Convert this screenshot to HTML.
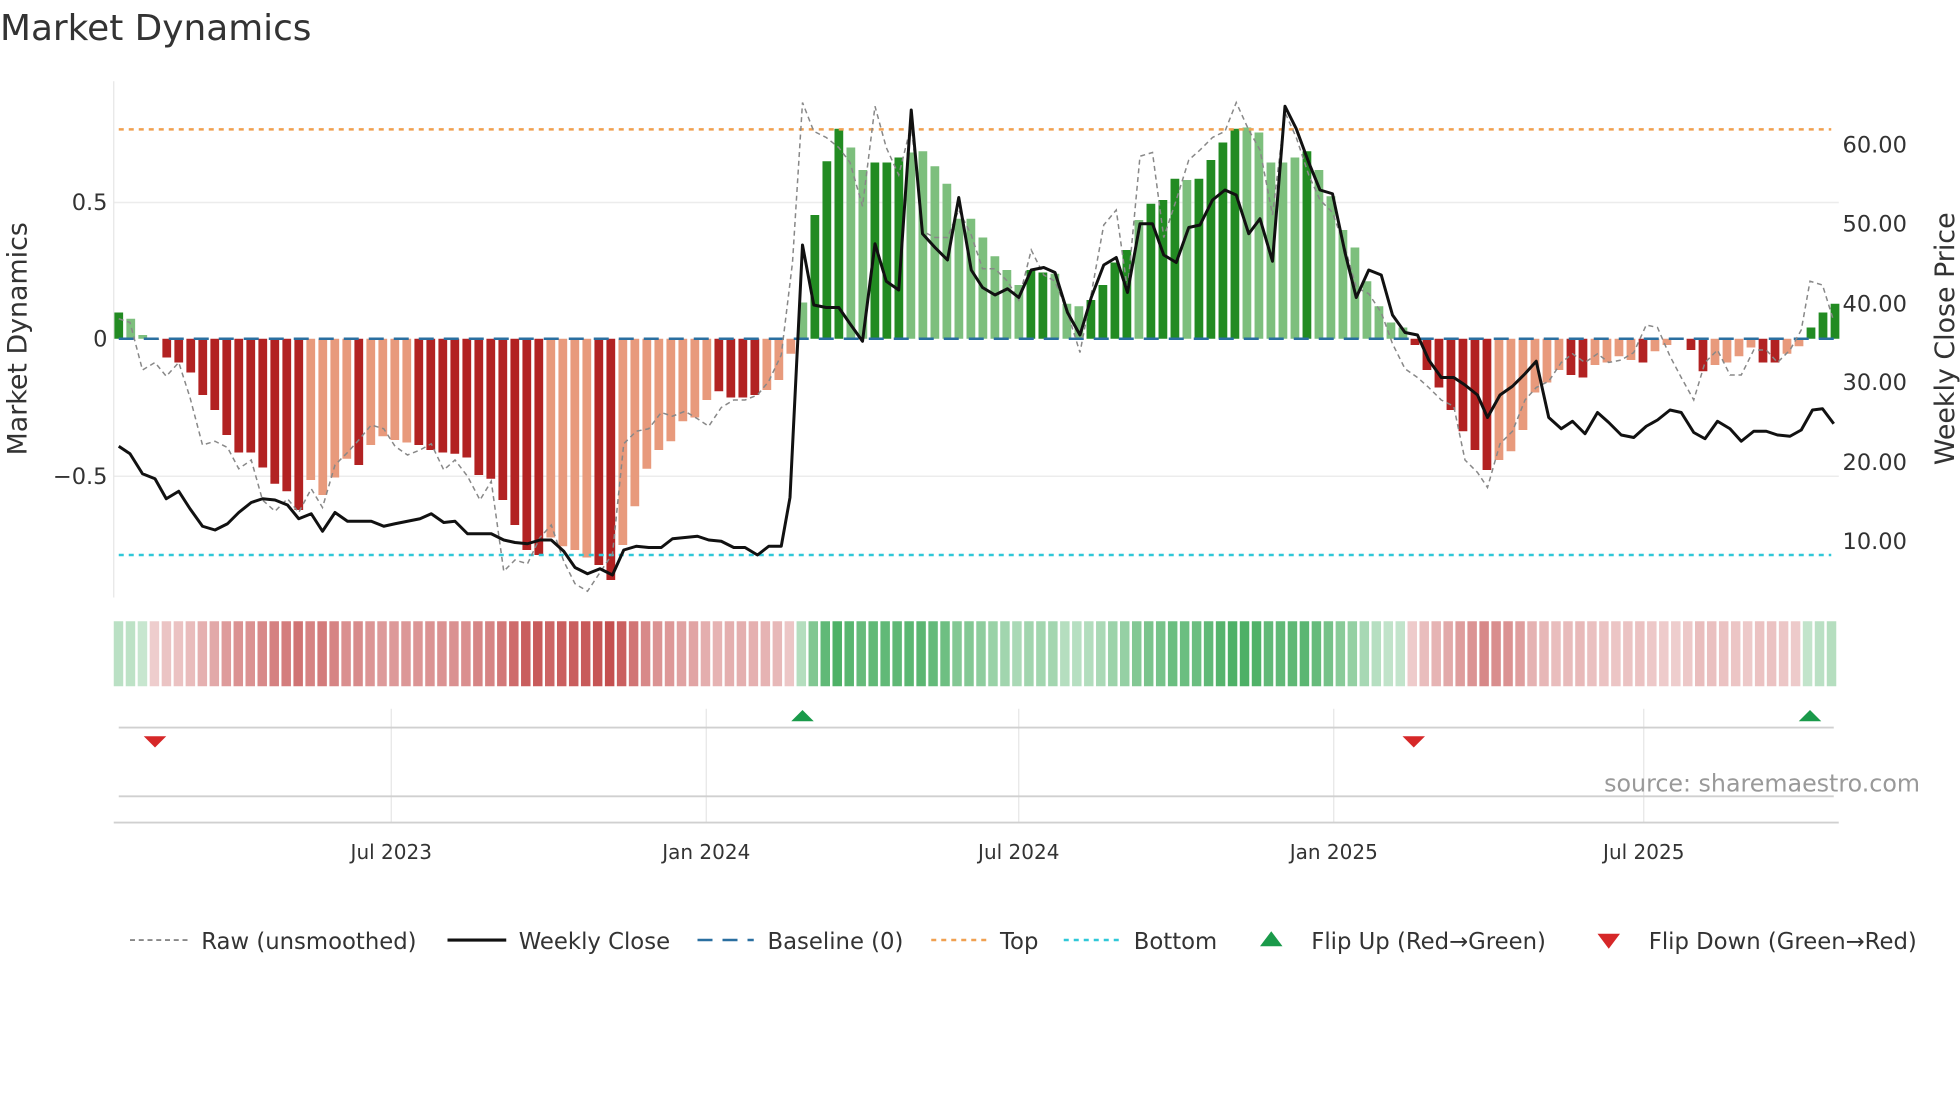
<!DOCTYPE html>
<html><head><meta charset="utf-8"><style>
html,body{margin:0;padding:0;background:#fff;width:1960px;height:1102px;overflow:hidden}
svg{display:block;font-family:"DejaVu Sans","Liberation Sans",sans-serif}
</style></head><body>
<svg id="s" width="1960" height="1102" viewBox="0 0 1568 881.6" xmlns="http://www.w3.org/2000/svg">
<rect width="1568" height="881.6" fill="#fff"/>
<text x="0" y="32" font-size="28.7" fill="#333">Market Dynamics</text>
<g stroke="#ececec" stroke-width="1.2">
<line x1="91" y1="162" x2="1471" y2="162"/>
<line x1="91" y1="381" x2="1471" y2="381"/>
</g>
<line x1="91" y1="65" x2="91" y2="478" stroke="#e6e6e6" stroke-width="1"/>
<g id="bars"></g>
<line x1="95" y1="271" x2="1468" y2="271" stroke="#2a6fa0" stroke-width="2" stroke-dasharray="12,8"/>
<line x1="95" y1="103.5" x2="1465" y2="103.5" stroke="#f0a050" stroke-width="2" stroke-dasharray="4,4"/>
<line x1="95" y1="444" x2="1465" y2="444" stroke="#30c8d8" stroke-width="2" stroke-dasharray="4,4"/>
<polyline id="raw" fill="none" stroke="#888" stroke-width="1.2" stroke-dasharray="4,3"/>
<polyline id="close" fill="none" stroke="#111" stroke-width="2.4" stroke-linejoin="round"/>
<g font-size="18" fill="#333" text-anchor="end">
<text x="86" y="168">0.5</text><text x="86" y="277">0</text><text x="86" y="387">−0.5</text>
</g>
<g font-size="18" fill="#333">
<text x="1474" y="122">60.00</text><text x="1474" y="185">50.00</text><text x="1474" y="249">40.00</text>
<text x="1474" y="312">30.00</text><text x="1474" y="376">20.00</text><text x="1474" y="439">10.00</text>
</g>
<text transform="translate(21,271) rotate(-90)" font-size="21.5" fill="#333" text-anchor="middle">Market Dynamics</text>
<text transform="translate(1563,271) rotate(-90)" font-size="21.5" fill="#333" text-anchor="middle">Weekly Close Price</text>
<g id="heat"></g>
<g stroke="#e6e6e6" stroke-width="1">
<line x1="313" y1="567" x2="313" y2="658"/><line x1="565" y1="567" x2="565" y2="658"/>
<line x1="815" y1="567" x2="815" y2="658"/><line x1="1067" y1="567" x2="1067" y2="658"/>
<line x1="1315" y1="567" x2="1315" y2="658"/>
</g>
<line x1="95" y1="582" x2="1467" y2="582" stroke="#d0d0d0" stroke-width="1.5"/>
<line x1="95" y1="637" x2="1467" y2="637" stroke="#d0d0d0" stroke-width="1.5"/>
<line x1="91" y1="658" x2="1471" y2="658" stroke="#d0d0d0" stroke-width="1.5"/>
<polygon points="115,589 133,589 124,598" fill="#d62728"/>
<polygon points="1122,589 1140,589 1131,598" fill="#d62728"/>
<polygon points="633,577 651,577 642,568" fill="#1a9a4a"/>
<polygon points="1439,577 1457,577 1448,568" fill="#1a9a4a"/>
<text x="1536" y="633" font-size="19" fill="#999" text-anchor="end">source: sharemaestro.com</text>
<g font-size="16" fill="#333" text-anchor="middle">
<text x="313" y="687">Jul 2023</text><text x="565" y="687">Jan 2024</text><text x="815" y="687">Jul 2024</text>
<text x="1067" y="687">Jan 2025</text><text x="1315" y="687">Jul 2025</text>
</g>
<g font-size="18.2" fill="#333">
<line x1="104" y1="752" x2="150" y2="752" stroke="#888" stroke-width="1.5" stroke-dasharray="4,3"/>
<text x="161" y="759">Raw (unsmoothed)</text>
<line x1="358" y1="752" x2="405" y2="752" stroke="#111" stroke-width="2.5"/>
<text x="415" y="759">Weekly Close</text>
<line x1="558" y1="752" x2="603" y2="752" stroke="#2a6fa0" stroke-width="2" stroke-dasharray="12,8"/>
<text x="614" y="759">Baseline (0)</text>
<line x1="745" y1="752" x2="790" y2="752" stroke="#f0a050" stroke-width="2" stroke-dasharray="4,4"/>
<text x="800" y="759">Top</text>
<line x1="851" y1="752" x2="897" y2="752" stroke="#30c8d8" stroke-width="2" stroke-dasharray="4,4"/>
<text x="907" y="759">Bottom</text>
<polygon points="1008,757 1026,757 1017,745" fill="#1a9a4a"/>
<text x="1049" y="759">Flip Up (Red→Green)</text>
<polygon points="1278,747 1296,747 1287,759" fill="#d62728"/>
<text x="1319" y="759">Flip Down (Green→Red)</text>
</g>
</svg>
<script>
var B="250d 255l 268l 272l 286d 290d 298d 316d 328d 348d 362d 362d 374d 387d 393d 408d 384l 396l 382l 367l 372d 356l 349l 352l 354l 356d 360d 362d 363d 366d 380d 383d 400d 420d 440d 444d 430l 437l 440l 446l 452d 464d 436l 405l 375l 360l 353l 337l 334l 320l 313d 318d 318d 316d 312l 304l 283l 242l 172d 129d 103d 118l 136l 130d 130d 126d 122l 121l 133l 147l 175l 175l 190l 205l 216l 228l 216d 218d 219l 243l 245l 240d 228d 210d 200d 176l 163d 160d 143d 144l 143d 128d 114d 103d 102l 106l 130l 130l 126l 121d 136l 157l 184l 198l 225l 245l 258l 262l 276d 296d 310d 328d 345d 360d 376d 368l 361l 344l 314l 306l 296l 300d 302d 292l 290l 285l 288l 290d 281l 276l 272l 280d 297d 292l 290l 285l 278l 290d 290d 283l 277l 262d 250d 243d".split(" ");
var ns="http://www.w3.org/2000/svg",g=document.getElementById("bars"),h=document.getElementById("heat");
function el(p,t,a){var e=document.createElementNS(ns,t);for(var k in a)e.setAttribute(k,a[k]);p.appendChild(e);}
var n=B.length,st=(1468-95)/(n-1);
B.forEach(function(s,i){var y=parseFloat(s),d=s.slice(-1)=="d",x=95+i*st;
 var pos=y<271||(i>=58&&i<=120&&y<=272);var c;
 if(pos)c=d?"#228b22":"#7dbf7d";else c=d?"#b22222":"#e89a7c";
 var top=Math.min(y,271),hh=Math.abs(y-271);
 if(hh>0.5)el(g,"rect",{x:x-3.5,y:top,width:7,height:hh,fill:c});
 var m=Math.min(1,hh/190);var a=0.25+0.65*m;
 var hc=pos?"rgba(40,160,70,"+a+")":"rgba(190,60,60,"+a+")";
 el(h,"rect",{x:91+i*(1380/n),y:497,width:1380/n-2,height:52,fill:hc});
});
var C=[95,357,104,363,114,379,124,383,133,399,143,393,152,407,162,421,172,424,182,419,191,410,201,402,210,399,220,400,230,404,239,415,249,411,258,425,268,410,278,417,287,417,297,417,307,421,316,419,326,417,336,415,345,411,355,418,364,417,374,427,384,427,393,427,403,432,412,434,422,435,432,432,441,432,451,441,460,454,470,459,480,455,490,460,499,440,509,437,519,438,529,438,538,431,548,430,558,429,567,432,577,433,587,438,596,438,606,444,615,437,625,437,632,398,642,196,651,244,661,246,671,246,680,259,690,273,700,195,709,225,719,232,729,88,738,187,748,198,758,208,767,158,777,216,786,230,796,236,806,231,815,238,825,216,835,214,844,218,854,250,864,268,873,238,883,212,893,206,902,234,912,179,922,179,931,204,941,210,951,182,960,180,970,160,980,152,989,156,999,187,1008,175,1018,209,1028,85,1037,103,1047,130,1056,152,1066,155,1076,202,1085,238,1095,216,1105,220,1114,252,1124,266,1134,268,1143,288,1153,302,1163,302,1172,308,1182,316,1190,334,1200,316,1210,309,1220,299,1229,289,1239,334,1249,343,1258,337,1268,347,1278,330,1287,338,1297,348,1307,350,1317,341,1326,336,1336,328,1345,330,1355,346,1364,351,1374,337,1384,343,1393,353,1403,345,1413,345,1422,348,1432,349,1441,344,1450,328,1458,327,1467,339];
var R=[95,255,104,258,114,296,124,290,133,301,143,290,152,318,162,356,172,353,182,358,191,375,201,368,210,400,220,409,230,399,239,410,249,391,258,406,268,372,278,362,287,352,297,340,307,343,316,357,326,364,336,360,345,355,355,376,364,368,374,381,384,400,393,385,403,457,412,448,422,451,432,430,441,420,451,449,460,467,470,473,480,458,490,443,499,355,509,345,519,343,529,330,538,333,548,329,558,335,567,341,577,326,587,320,596,320,606,316,615,305,625,284,634,210,642,82,651,105,661,110,671,118,680,130,690,165,700,85,709,118,719,140,729,100,738,185,748,190,758,190,767,168,777,188,786,215,796,215,806,225,815,240,825,200,835,220,844,225,854,250,864,282,873,235,883,180,893,168,902,232,912,125,922,122,931,190,941,160,951,128,960,120,970,110,980,105,989,82,999,104,1008,120,1018,172,1028,90,1037,110,1047,140,1056,160,1066,170,1076,198,1085,230,1095,235,1105,250,1114,275,1124,295,1134,302,1143,310,1153,320,1163,325,1172,368,1182,378,1190,390,1200,355,1210,345,1220,320,1229,310,1239,305,1249,290,1258,283,1268,290,1278,283,1287,290,1297,288,1307,282,1317,260,1326,262,1336,285,1345,302,1355,320,1364,290,1374,280,1384,300,1393,300,1403,280,1413,280,1422,290,1432,280,1441,264,1448,225,1458,228,1467,257];
document.getElementById("close").setAttribute("points",C.join(" "));
document.getElementById("raw").setAttribute("points",R.join(" "));
</script>
</body></html>
